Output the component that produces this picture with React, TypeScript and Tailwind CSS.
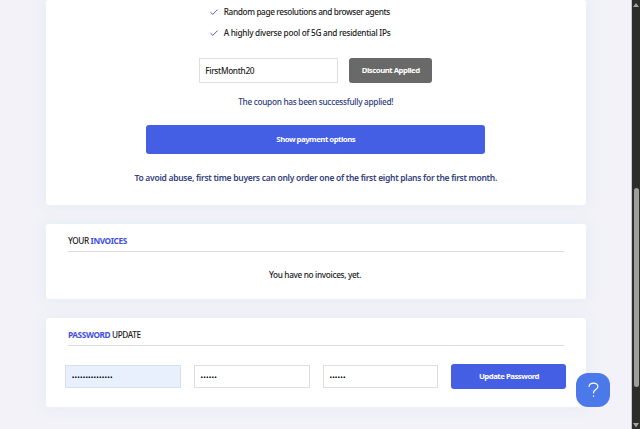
interface PasswordField {
  id: string;
  value: string;
  filled?: boolean;
}

const features = [
  { text: 'Random page resolutions and browser agents', tracking: 'tracking-[-0.37px]' },
  { text: 'A highly diverse pool of 5G and residential IPs', tracking: 'tracking-[-0.29px]' },
];

const passwordFields: PasswordField[] = [
  { id: 'current', value: '•••••••••••••••', filled: true },
  { id: 'new', value: '••••••' },
  { id: 'repeat', value: '••••••' },
];

const cardClass = 'bg-white rounded-[3px] shadow-[0_0_12px_2px_#e6eef3]';

const buttonClass = 'rounded-[3px] text-white font-bold text-[7.75px] tracking-[-0.48px] pb-[2px] shrink-0';

function CheckIcon() {
  return (
    <svg className="w-[8px] h-[7px] shrink-0" viewBox="0 0 8 7" fill="none" stroke="#5663ad" strokeWidth="1">
      <path d="M0.5 3.2 L2.8 5.4 L7.5 0.6" />
    </svg>
  );
}

function Scrollbar() {
  return (
    <div className="w-[9px] h-full shrink-0 bg-[#2c2c2c] border-l border-[#c9c9cd] flex flex-col items-center">
      <svg className="w-[6px] h-[5px] mt-[3px] shrink-0" viewBox="0 0 6 5" fill="#a3a3a3">
        <path d="M3 0 L6 4 H0 Z" />
      </svg>
      <div className="w-[5px] h-[199px] mt-[180px] rounded-full bg-[#9e9e9e]" />
      <svg className="w-[6px] h-[5px] mt-[36px] shrink-0" viewBox="0 0 6 5" fill="#a3a3a3">
        <path d="M0 0 H6 L3 4.5 Z" />
      </svg>
    </div>
  );
}

export default function App() {
  return (
    <div className="relative flex w-[640px] h-[429px] overflow-hidden bg-[#f2f2f8] font-['Noto_Sans',sans-serif] text-[#222] text-[8.25px] leading-[12px] font-medium">
      <main className="w-[631px] pl-[45.5px] pr-[45px] shrink-0">
        {/* Order */}
        <section className={`${cardClass} h-[205px] pt-[6px] flex flex-col items-center`}>
          <ul className="w-[212px] flex flex-col gap-[9px]">
            {features.map((feature) => (
              <li key={feature.text} className="flex items-center gap-[6px] whitespace-nowrap">
                <CheckIcon />
                <span className={feature.tracking}>{feature.text}</span>
              </li>
            ))}
          </ul>

          <div className="flex w-[233px] mt-[19px] justify-between">
            <div className="w-[139px] h-[25px] border border-[#dedede] px-[5px] flex items-center tracking-[-0.32px]">
              FirstMonth20
            </div>
            <button className={`${buttonClass} w-[83px] h-[25px] bg-[#696969]`}>Discount Applied</button>
          </div>

          <p className="mt-[13px] text-[#2f3d80] tracking-[-0.29px] whitespace-nowrap">
            The coupon has been successfully applied!
          </p>

          <button className={`${buttonClass} w-[339px] h-[29px] mt-[17px] bg-[#455fe4]`}>Show payment options</button>

          <p className="mt-[18px] text-[#36427c] text-[8.5px] font-semibold tracking-[-0.28px] whitespace-nowrap">
            To avoid abuse, first time buyers can only order one of the first eight plans for the first month.
          </p>
        </section>

        {/* Invoices */}
        <section className={`${cardClass} h-[75px] mt-[19px] px-[22.5px] pt-[11px]`}>
          <h2 className="h-[17px] border-b border-[#dcdce0] tracking-[-0.4px]">
            <span>YOUR</span> <span className="text-[#4350dc] font-bold">INVOICES</span>
          </h2>
          <p className="mt-[17px] pr-[1.5px] text-center tracking-[-0.34px]">You have no invoices, yet.</p>
        </section>

        {/* Password */}
        <section className={`${cardClass} h-[88.5px] mt-[19px] px-[19.5px] pt-[11px]`}>
          <h2 className="h-[17px] mx-[3px] border-b border-[#dcdce0] tracking-[-0.4px]">
            <span className="text-[#4350dc] font-bold">PASSWORD</span> <span>UPDATE</span>
          </h2>
          <div className="flex items-center mt-[18px] gap-[13px]">
            {passwordFields.map((field) => (
              <div
                key={field.id}
                className={`w-[116px] h-[23px] border px-[6px] flex items-center text-[5.5px] font-bold text-black tracking-[0.66px] ${
                  field.filled ? 'bg-[#e7f0fc] border-[#d7e0ea]' : 'border-[#dedede]'
                }`}
              >
                {field.value}
              </div>
            ))}
            <button className={`${buttonClass} w-[115px] h-[25px] bg-[#455fe4]`}>Update Password</button>
          </div>
        </section>
      </main>

      <Scrollbar />

      {/* Help bubble */}
      <button className="absolute left-[576px] top-[373px] w-[34px] h-[34px] rounded-[12px] bg-[#4c79e9] flex items-center justify-center">
        <svg className="w-[11px] h-[16px]" viewBox="0 0 12 17" fill="none" stroke="#fff" strokeWidth="1.3" strokeLinecap="round">
          <path d="M1.2 4.6 C1.4 2.2 3.4 1 6 1 C8.7 1 10.8 2.5 10.8 4.8 C10.8 8 6 8 6 11.6" />
          <path d="M6 15 V15.4" />
        </svg>
      </button>
    </div>
  );
}
